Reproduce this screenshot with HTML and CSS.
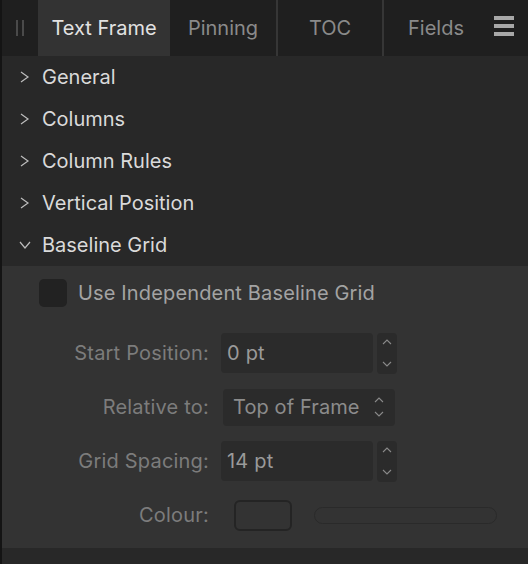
FILE: index.html
```html
<!DOCTYPE html>
<html>
<head>
<meta charset="utf-8">
<link rel="stylesheet" href="styles.css">
</head>
<body>
<div class="app">
  <div class="edge"></div>
  <div class="panel">
    <div class="tabbar">
      <div class="grip"><span></span><span></span></div>
      <div class="tab active">Text Frame</div>
      <div class="tab">Pinning</div>
      <div class="tab sep">TOC</div>
      <div class="tab sep">Fields</div>
      <div class="menu"><span></span><span></span><span></span></div>
    </div>
    <div class="section"><svg class="chev" width="12" height="14" viewBox="0 0 12 14"><path d="M2 2 L9 7 L2 12" fill="none" stroke="#bdbdbd" stroke-width="1.2"/></svg><span>General</span></div>
    <div class="section"><svg class="chev" width="12" height="14" viewBox="0 0 12 14"><path d="M2 2 L9 7 L2 12" fill="none" stroke="#bdbdbd" stroke-width="1.2"/></svg><span>Columns</span></div>
    <div class="section"><svg class="chev" width="12" height="14" viewBox="0 0 12 14"><path d="M2 2 L9 7 L2 12" fill="none" stroke="#bdbdbd" stroke-width="1.2"/></svg><span>Column Rules</span></div>
    <div class="section"><svg class="chev" width="12" height="14" viewBox="0 0 12 14"><path d="M2 2 L9 7 L2 12" fill="none" stroke="#bdbdbd" stroke-width="1.2"/></svg><span>Vertical Position</span></div>
    <div class="section"><svg class="chev" width="12" height="14" viewBox="0 0 12 14"><path d="M1 4 L6 10 L11 4" fill="none" stroke="#bdbdbd" stroke-width="1.2"/></svg><span>Baseline Grid</span></div>
    <div class="body">
      <div class="checkrow"><div class="checkbox"></div><span>Use Independent Baseline Grid</span></div>
      <div class="form">
        <div class="label">Start Position:</div>
        <div class="ctrl"><div class="field">0 pt</div><div class="stepper"><svg width="12" height="32" viewBox="0 0 12 32"><path d="M2 7 L6 3 L10 7" fill="none" stroke="#8a8a8a" stroke-width="1.1"/><path d="M2 25 L6 29 L10 25" fill="none" stroke="#8a8a8a" stroke-width="1.1"/></svg></div></div>
        <div class="label">Relative to:</div>
        <div class="ctrl"><div class="select"><span>Top of Frame</span><svg width="12" height="22" viewBox="0 0 12 22"><path d="M2 6 L6 2 L10 6" fill="none" stroke="#8a8a8a" stroke-width="1.1"/><path d="M2 16 L6 20 L10 16" fill="none" stroke="#8a8a8a" stroke-width="1.1"/></svg></div></div>
        <div class="label">Grid Spacing:</div>
        <div class="ctrl"><div class="field">14 pt</div><div class="stepper"><svg width="12" height="32" viewBox="0 0 12 32"><path d="M2 7 L6 3 L10 7" fill="none" stroke="#8a8a8a" stroke-width="1.1"/><path d="M2 25 L6 29 L10 25" fill="none" stroke="#8a8a8a" stroke-width="1.1"/></svg></div></div>
        <div class="label">Colour:</div>
        <div class="ctrl"><div class="swatch"></div><div class="track"></div></div>
      </div>
    </div>
  </div>
</div>
</body>
</html>
```
FILE: styles.css
```css
html, body {
  margin: 0;
  padding: 0;
  background: #282828;
}
body {
  font-family: Inter, "Noto Sans", sans-serif;
  width: 528px;
  height: 564px;
  overflow: hidden;
}
.app {
  display: flex;
  height: 564px;
}
.edge {
  width: 2px;
  background: #141414;
  flex: none;
}
.panel {
  flex: 1;
  display: flex;
  flex-direction: column;
}
.tabbar {
  height: 56px;
  background: #1f1f1f;
  display: flex;
  flex: none;
}
.grip {
  width: 36px;
  display: flex;
  justify-content: center;
  align-items: center;
  gap: 4px;
}
.grip span {
  width: 2px;
  height: 16px;
  background: #4a4a4a;
}
.tab {
  width: 106px;
  display: flex;
  align-items: center;
  justify-content: center;
  font-size: 20px;
  color: #8a8a8a;
  box-sizing: border-box;
}
.tab.active {
  width: 132px;
  background: #333333;
  color: #e2e2e2;
}
.tab.sep {
  border-left: 2px solid #363636;
}
.menu {
  flex: 1;
  display: flex;
  flex-direction: column;
  justify-content: flex-start;
  align-items: flex-start;
  padding: 16px 0 0 6px;
  gap: 4px;
}
.menu span {
  width: 20px;
  height: 4px;
  background: #a8a8a8;
}
.section {
  height: 42px;
  display: flex;
  align-items: center;
  padding-left: 17px;
  font-size: 20px;
  color: #dadada;
  flex: none;
}
.chev {
  width: 12px;
  margin-right: 11px;
}
.body {
  background: #333333;
  padding: 13px 0 6px 0;
  flex: none;
}
.checkrow {
  display: flex;
  align-items: center;
  padding-left: 37px;
  height: 28px;
  font-size: 20px;
  letter-spacing: 0.15px;
  color: #a3a3a3;
}
.checkbox {
  width: 28px;
  height: 28px;
  border-radius: 5px;
  background: #222222;
  margin-right: 11px;
}
.form {
  margin-top: 19px;
  display: grid;
  grid-template-columns: 207px 1fr;
  grid-auto-rows: 54px;
  column-gap: 12px;
  align-items: center;
}
.label {
  text-align: right;
  font-size: 20px;
  letter-spacing: 0.2px;
  color: #7c7c7c;
}
.ctrl {
  display: flex;
  align-items: center;
}
.field {
  width: 152px;
  height: 40px;
  box-sizing: border-box;
  border-radius: 4px;
  background: #2b2b2b;
  color: #9a9a9a;
  font-size: 20px;
  letter-spacing: 0.2px;
  display: flex;
  align-items: center;
  padding-left: 6px;
}
.stepper {
  width: 20px;
  height: 41px;
  margin-left: 4px;
  border-radius: 4px;
  background: #2b2b2b;
  display: flex;
  align-items: center;
  justify-content: center;
}
.select {
  margin-left: 2px;
  width: 172px;
  height: 37px;
  box-sizing: border-box;
  border-radius: 4px;
  background: #2b2b2b;
  color: #8c8c8c;
  font-size: 20px;
  letter-spacing: 0.1px;
  display: flex;
  align-items: center;
  justify-content: space-between;
  padding: 0 10px 0 10px;
}
.swatch {
  margin-left: 13px;
  width: 58px;
  height: 31px;
  box-sizing: border-box;
  border: 2px solid #242424;
  border-radius: 6px;
  background: #333333;
}
.track {
  margin-left: 22px;
  width: 183px;
  height: 17px;
  box-sizing: border-box;
  border: 1.5px solid #2a2a2a;
  border-radius: 9px;
}
```
